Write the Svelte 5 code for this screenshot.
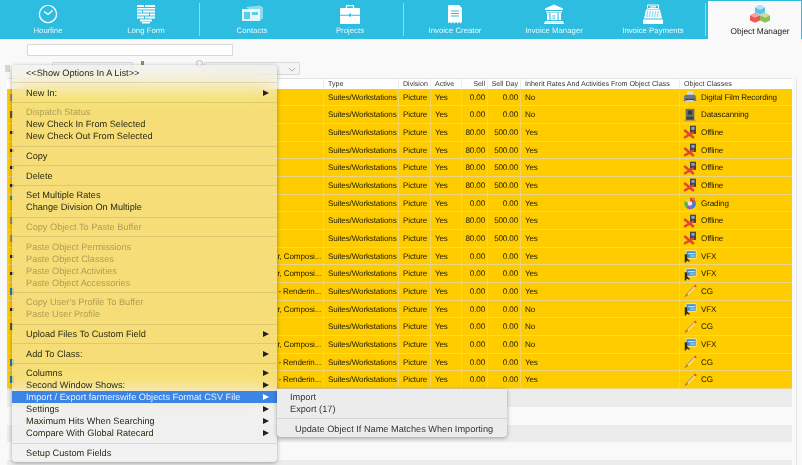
<script>
  const tabs = [
    { label: 'Hourline', icon: 'clock', w: 96, pad: 0 },
    { label: 'Long Form', icon: 'form', w: 102, pad: 2, div: true },
    { label: 'Contacts', icon: 'contacts', w: 102, pad: 0 },
    { label: 'Projects', icon: 'case', w: 99, pad: 5, div: true },
    { label: 'Invoice Creator', icon: 'receipt', w: 100, pad: 0 },
    { label: 'Invoice Manager', icon: 'bank', w: 98, pad: 0 },
    { label: 'Invoice Payments', icon: 'register', w: 101, pad: 1 }
  ];
  const C = 'r, Composi...';
  const R = '- Renderin...';
  const row = (mark, name, sell, day, inherit, cls) => ({ mark, name, sell, day, inherit, cls });
  const rows = [
    row('grey', '', '0.00', '0.00', 'No', 'Digital Film Recording'),
    row('tall', '', '0.00', '0.00', 'No', 'Datascanning'),
    row('dot', '', '80.00', '500.00', 'Yes', 'Offline'),
    row('dot', '', '80.00', '500.00', 'Yes', 'Offline'),
    row('dot', '', '80.00', '500.00', 'Yes', 'Offline'),
    row('dot', '', '80.00', '500.00', 'Yes', 'Offline'),
    row('green', '', '0.00', '0.00', 'Yes', 'Grading'),
    row('grey', '', '80.00', '500.00', 'Yes', 'Offline'),
    row('grey', '', '80.00', '500.00', 'Yes', 'Offline'),
    row('dot', C, '0.00', '0.00', 'Yes', 'VFX'),
    row('dot', C, '0.00', '0.00', 'Yes', 'VFX'),
    row('blue', R, '0.00', '0.00', 'Yes', 'CG'),
    row('dot', C, '0.00', '0.00', 'No', 'VFX'),
    row('tall', '', '0.00', '0.00', 'No', 'CG'),
    row('none', C, '0.00', '0.00', 'No', 'VFX'),
    row('blue', R, '0.00', '0.00', 'Yes', 'CG'),
    row('blue', R, '0.00', '0.00', 'Yes', 'CG')
  ];
  const classIcon = { 'Digital Film Recording': 'printer', Datascanning: 'scanner', Offline: 'offline', Grading: 'wheel', VFX: 'vfx', CG: 'pencil' };
  const groups = [
    [['<<Show Options In A List>>']],
    [['New In:', 'sub']],
    [['Dispatch Status', 'off'], ['New Check In From Selected'], ['New Check Out From Selected']],
    [['Copy']],
    [['Delete']],
    [['Set Multiple Rates'], ['Change Division On Multiple']],
    [['Copy Object To Paste Buffer', 'off']],
    [['Paste Object Permissions', 'off'], ['Paste Object Classes', 'off'], ['Paste Object Activities', 'off'], ['Paste Object Accessories', 'off']],
    [["Copy User's Profile To Buffer", 'off'], ['Paste User Profile', 'off']],
    [['Upload Files To Custom Field', 'sub']],
    [['Add To Class:', 'sub']],
    [['Columns', 'sub'], ['Second Window Shows:', 'sub'], ['Import / Export farmerswife Objects Format CSV File', 'sub hot'], ['Settings', 'sub'], ['Maximum Hits When Searching', 'sub'], ['Compare With Global Ratecard', 'sub']],
    [['Setup Custom Fields']]
  ];
</script>

{#snippet tabIcon(name)}
  <svg class="tab-icon" viewBox="0 0 24 20" aria-hidden="true">
    {#if name === 'clock'}
      <circle cx="12" cy="10" r="8.6" fill="none" stroke="#fff" stroke-width="1.3" />
      <path d="M12 10.5 L8 7.5 M12 10.5 L16.5 6.5" stroke="#fff" stroke-width="1.3" fill="none" />
    {:else if name === 'form'}
      <path fill="#fff" d="M3 1h7v2H3zM11 1h10v2H11zM3 4h18v1.4H3zM3 6.5h5v2H3zM9 6.5h12v2H9zM3 9.5h12v2H3zM16 9.5h5v2h-5zM3 12.5h7v2H3zM11 12.5h10v2H11zM6 15.5h12v2H6zM8 18h8v1.5H8z" />
    {:else if name === 'contacts'}
      <path fill="#fff" opacity=".45" d="M6 3l14-1.5 3 2v11l-3 2z" />
      <rect x="2" y="5" width="18" height="12" fill="#fff" opacity=".85" />
      <path fill="#2dbde0" d="M4 8h6v7H4zM12 8h6v3h-6z" opacity=".75" />
    {:else if name === 'case'}
      <path fill="none" stroke="#fff" stroke-width="1.2" d="M8.5 4V1.6h7V4" />
      <path fill="#fff" d="M2 4h20v6.8H2zM2 11.8h20V20H2z" />
      <rect x="11" y="9.6" width="2" height="3" fill="#2dbde0" />
    {:else if name === 'receipt'}
      <path fill="#fff" d="M5 1h11l3 3v14l-1.4 1.4-1.4-1.4-1.6 1.4-1.6-1.4-1.6 1.4-1.6-1.4-1.6 1.4-1.6-1.4-1.6 1.4z" />
      <path stroke="#2dbde0" stroke-width="1" d="M8 7h8M8 9.5h8M8 12h8" />
    {:else if name === 'bank'}
      <path fill="#fff" d="M12 0.5 L21 4.5 V6 H3 V4.5z M4 7h16v1.4H4z M5 9h2.4v7H5z M16.6 9H19v7h-2.4z M8.5 9h7v7h-7z M3 17h18v1.2H3z M2 18.6h20V20H2z" />
      <text x="12" y="15" font-size="6" text-anchor="middle" fill="#2dbde0" font-family="Liberation Sans">$</text>
    {:else if name === 'register'}
      <path fill="none" stroke="#fff" stroke-width="1" d="M6.5 1h11v3.5h-11z" />
      <path fill="#fff" d="M9 2.2h6v1.2H9z M5 5.5h14l2 9H3z M2 15.5h20V20H2z" />
      <path stroke="#2dbde0" stroke-width="1" stroke-dasharray="1.4 1.2" d="M6 8h12M5.6 10h12.8M5.2 12h13.6" />
    {/if}
  </svg>
{/snippet}

{#snippet classGlyph(name)}
  <svg class="cls-icon" viewBox="0 0 16 16" aria-hidden="true">
    {#if name === 'printer'}
      <path fill="#d6dbe2" d="M5 1.5h6.5l.8 5H4.2z" />
      <path fill="#6f7985" d="M1.5 7 Q2 5.5 4 5.5h8q2 0 2.5 1.5l.7 5.5H.8z" />
      <path fill="#3c4550" d="M3 10h10v1.4H3z" />
      <path fill="#c8ccd2" d="M4 11.5h8l.6 2.5H3.4z" />
    {:else if name === 'scanner'}
      <path fill="#6f6f66" d="M3 1h10v14H3z" />
      <path fill="#2f3a4a" d="M5.4 3h5.2v4.5H5.4z" />
      <path fill="#3f4046" d="M4 10h8v3.5H4z" />
      <path fill="#b39b45" d="M1.5 13.5h13V15h-13z" />
    {:else if name === 'offline'}
      <path fill="#3d4450" d="M8 .8h6.8v9.4H8z" />
      <path fill="#8aa0c0" d="M9.5 2.3h3.8v3.2H9.5z" />
      <path fill="#2a2d33" d="M9 7h4.8v2H9z" />
      <path stroke="#e0482a" stroke-width="3" stroke-linecap="round" d="M2.4 6.5 L11.5 14 M11.5 8.5 L2.4 14" />
    {:else if name === 'wheel'}
      <circle cx="8" cy="8.5" r="6.5" fill="#4fb35a" />
      <path fill="#e0483e" d="M8 8.5V2A6.5 6.5 0 0 1 14.2 6.5z" />
      <path fill="#f0d040" d="M8 8.5V2A6.5 6.5 0 0 0 2 6z" />
      <path fill="#3e7fd0" d="M8 8.5l6.2-2A6.5 6.5 0 0 1 11 14.3z" />
      <path fill="#9a5cc8" d="M8 8.5l3 5.8A6.5 6.5 0 0 1 4 13.5z" />
      <circle cx="8" cy="8.5" r="2.6" fill="#e8e8e8" />
      <path fill="#d08a30" d="M11.5 1l2.6 1.5-2 2.5-1.8-1.2z" />
    {:else if name === 'vfx'}
      <path fill="#f1e7a8" d="M3 1.5h12.5v9.5H3z" />
      <path fill="#3f8fd8" d="M4 2.5h10.5v7.5H4z" />
      <path fill="#bfe3f4" d="M6 4.5h7.5v1.6H6zM8 7.4h5.5v1.2H8z" />
      <path fill="#2e2a20" d="M2 6h2.4l.6 5 3 2.6-1 1-2.6-1.6-1 2.4H2z" />
    {:else}
      <path fill="#f2e2a0" d="M4 10.5 L12.5 2 L14.5 4 L6 12.5z" />
      <path fill="#c99a3a" d="M4 10.5 L12.5 2 L13.4 2.9 L4.9 11.4z" />
      <path fill="#e2452f" d="M12.5 2 L13.8 .7 L15.8 2.7 L14.5 4z" />
      <path fill="#9a8440" d="M4 10.5 L6 12.5 L1.2 15.3z" />
    {/if}
  </svg>
{/snippet}

<div class="page">
  <nav class="tabs">
    {#each tabs as t}
      <div class="tab" style="width:{t.w}px;padding-right:{t.pad}px">
        {@render tabIcon(t.icon)}
        <span>{t.label}</span>
      </div>
      {#if t.div}<i class="divider"></i>{/if}
    {/each}
    <i class="divider last"></i>
    <div class="tab active">
      <svg class="tab-icon cubes" viewBox="0 0 24 20" aria-hidden="true">
        <path fill="#5cc4e8" d="M12 0l5 2.4v5L12 9.8 7 7.4v-5z" />
        <path fill="#b6e4f4" d="M12 0l5 2.4-5 2.4-5-2.4z" />
        <path fill="#f0555a" d="M7 8l5 2.4v5L7 17.8l-5-2.4v-5z" />
        <path fill="#fba0a0" d="M7 8l5 2.4-5 2.4-5-2.4z" />
        <path fill="#8cc152" d="M17 8l5 2.4v5l-5 2.4-5-2.4v-5z" />
        <path fill="#c6e39a" d="M17 8l5 2.4-5 2.4-5-2.4z" />
      </svg>
      <span>Object Manager</span>
    </div>
  </nav>

  <div class="search"><input type="text" aria-label="Search" /></div>

  <div class="filters">
    <span class="handle"></span>
    <span class="sel first"></span>
    <span class="green"></span>
    <span class="circle"></span>
    <span class="sel second">
      <svg viewBox="0 0 10 6" aria-hidden="true"><path d="M1 1l4 4 4-4" fill="none" stroke="#999" stroke-width="1" /></svg>
    </span>
  </div>

  <div class="table-wrap">
    <div class="table">
      <div class="row head">
        <div class="c name"></div><div class="c">Type</div><div class="c">Division</div><div class="c">Active</div>
        <div class="c num">Sell</div><div class="c num">Sell Day</div>
        <div class="c">Inherit Rates And Activities From Object Class</div><div class="c">Object Classes</div>
      </div>
      {#each rows as r}
        <div class="row body">
          <div class="c name"><i class="mark {r.mark}"></i><span>{r.name}</span></div>
          <div class="c">Suites/Workstations</div><div class="c">Picture</div><div class="c">Yes</div>
          <div class="c num">{r.sell}</div><div class="c num">{r.day}</div>
          <div class="c">{r.inherit}</div>
          <div class="c cls">{@render classGlyph(classIcon[r.cls])}<span>{r.cls}</span></div>
        </div>
      {/each}
      <div class="stripe grey"></div><div class="stripe"></div><div class="stripe grey"></div><div class="stripe"></div><div class="stripe grey"></div>
    </div>
  </div>

  <div class="menu main">
    {#each groups as g, i}
      {#if i > 0}<div class="sep"></div>{/if}
      {#each g as [text, flags]}
        <div class="item" class:off={flags?.includes('off')} class:hot={flags?.includes('hot')}>
          <span>{text}</span>
          {#if flags?.includes('sub')}<b class="arrow"></b>{/if}
        </div>
      {/each}
    {/each}
  </div>

  <div class="menu submenu">
    <div class="item">Import</div>
    <div class="item">Export (17)</div>
    <div class="sep"></div>
    <div class="item indent">Update Object If Name Matches When Importing</div>
  </div>
</div>

<style>
  :global(body) { margin: 0; background: #f9f9f9; }
  .page {
    position: relative; width: 802px; height: 465px; overflow: hidden;
    background: #f9f9f9; font-family: "Liberation Sans", Arial, sans-serif; color: #222;
    text-rendering: geometricPrecision; filter: blur(.35px);
  }
  .tabs { display: flex; height: 38.5px; background: #2dbde0; }
  .tab {
    display: flex; flex-direction: column; align-items: center; justify-content: flex-end;
    padding-bottom: 3px; box-sizing: border-box; color: #eaf8fc; font-size: 7.8px; line-height: 11px; flex: none;
  }
  .tab-icon { width: 24px; height: 20px; margin-bottom: 1px; flex: none; }
  .divider { width: 1px; height: 33px; margin: 3px 1px 0; background: rgba(255,255,255,.45); flex: none; }
  .divider.last { margin-right: 2px; margin-left: 1px; }
  .tab.active {
    width: 93px; height: 37.5px; margin-top: 1px; background: #f9f9f9; color: #222;
    font-size: 8.3px; padding-bottom: 2px; padding-left: 11px;
  }

  .search { padding: 5px 0 0 27px; }
  .search input {
    display: block; width: 206px; height: 12px; padding: 0; margin: 0; box-sizing: border-box;
    border: 1px solid #d8d8d8; background: #fff; border-radius: 1px;
  }
  .filters { display: flex; align-items: center; height: 13px; margin-top: 6px; padding-left: 5px; }
  .filters > span { flex: none; }
  .handle { width: 5px; height: 7px; background: #d5d5d5; margin-right: 42px; }
  .sel { display: block; height: 13px; box-sizing: border-box; border: 1px solid #d8d8d8; background: #f4f4f4; border-radius: 1px; }
  .sel.first { width: 81px; margin-right: 8px; }
  .green { width: 3px; height: 4px; background: #6aa84f; margin: -10px 52px 0 0; }
  .circle { width: 5px; height: 5px; border: 1px solid #bbb; border-radius: 50%; margin: -10px 0 0 0; }
  .sel.second { width: 96px; margin-left: 1px; position: relative; }
  .sel.second svg { position: absolute; right: 3px; top: 4px; width: 8px; height: 5px; }

  .table-wrap {
    box-sizing: border-box; width: 797px; height: 500px; margin-top: 3.2px; padding: 0 4px 0 7px;
    border-right: 1px solid #e6e6e6;
  }
  .table { width: 785px; font-size: 8.1px; letter-spacing: -.15px; }
  .row {
    display: grid; grid-template-columns: 317px 75px 32px 31px 26px 33px 159px 112px;
    box-sizing: border-box;
  }
  .row.head { height: 11px; background: #fff; border-top: 1px solid #e2e2e2; line-height: 10px; color: #333; font-size: 7.1px; letter-spacing: 0; }
  .row.head .c { border-right: 1px solid #eee; padding-left: 4px; }
  .row.head .c:last-child { border: 0; }
  .row.body { height: 17.68px; background: #ffcc00; border-bottom: 1px solid #ead48a; color: #1f1a05; }
  .c { box-sizing: border-box; padding: 0 2px 0 4px; white-space: nowrap; overflow: hidden; display: flex; align-items: center; }
  .row.body .c { border-right: 1px solid #eed264; }
  .row.body .c:last-child { border-right: 0; }
  .num { justify-content: flex-end; }
  .name { justify-content: space-between; }
  .cls { padding-left: 3px; gap: 4px; }
  .cls-icon { width: 14px; height: 14px; flex: none; }
  .mark { display: block; flex: none; margin-left: -1px; }
  .mark.dot { width: 4px; height: 3px; background: #222; }
  .mark.tall { width: 3px; height: 7px; background: #6b5a1c; }
  .mark.grey { width: 3px; height: 7px; background: #a09468; }
  .mark.green { width: 3px; height: 4px; background: #5a9a3a; }
  .mark.blue { width: 4px; height: 7px; background: #2f7aa8; }
  .stripe { height: 17.72px; background: #f9f9f9; }
  .stripe.grey { background: #ececec; }

  .menu {
    position: absolute; box-sizing: border-box; border-radius: 4px; color: #2a2a10;
    font-size: 9.2px; box-shadow: 0 1px 4px rgba(0,0,0,.35);
    backdrop-filter: blur(12px) saturate(1.3);
    background: rgba(238,238,238,.5);
  }
  .main { left: 12px; top: 65px; width: 265px; height: 397px; padding-top: 2px; }
  .submenu { left: 277px; top: 389px; width: 230px; height: 48px; padding-top: 2px; background: #ececec; border-radius: 0 0 4px 4px; color: #333; }
  .item { height: 12px; line-height: 12px; padding: 0 14px; display: flex; justify-content: space-between; align-items: center; white-space: nowrap; }
  .submenu .item { padding-left: 13px; }
  .submenu .item.indent { padding-left: 18px; }
  .item.off { color: rgba(70,70,40,.42); }
  .item.hot { background: #3c84e6; color: #e8f0fc; }
  .sep { height: 7.67px; display: flex; align-items: center; }
  .sep::before { content: ""; display: block; width: 100%; height: 1px; background: rgba(120,120,80,.2); }
  .arrow { width: 0; height: 0; margin-right: -6px; border-left: 6px solid #222; border-top: 3.5px solid transparent; border-bottom: 3.5px solid transparent; }
  .item.hot .arrow { border-left-color: #fff; }
</style>
